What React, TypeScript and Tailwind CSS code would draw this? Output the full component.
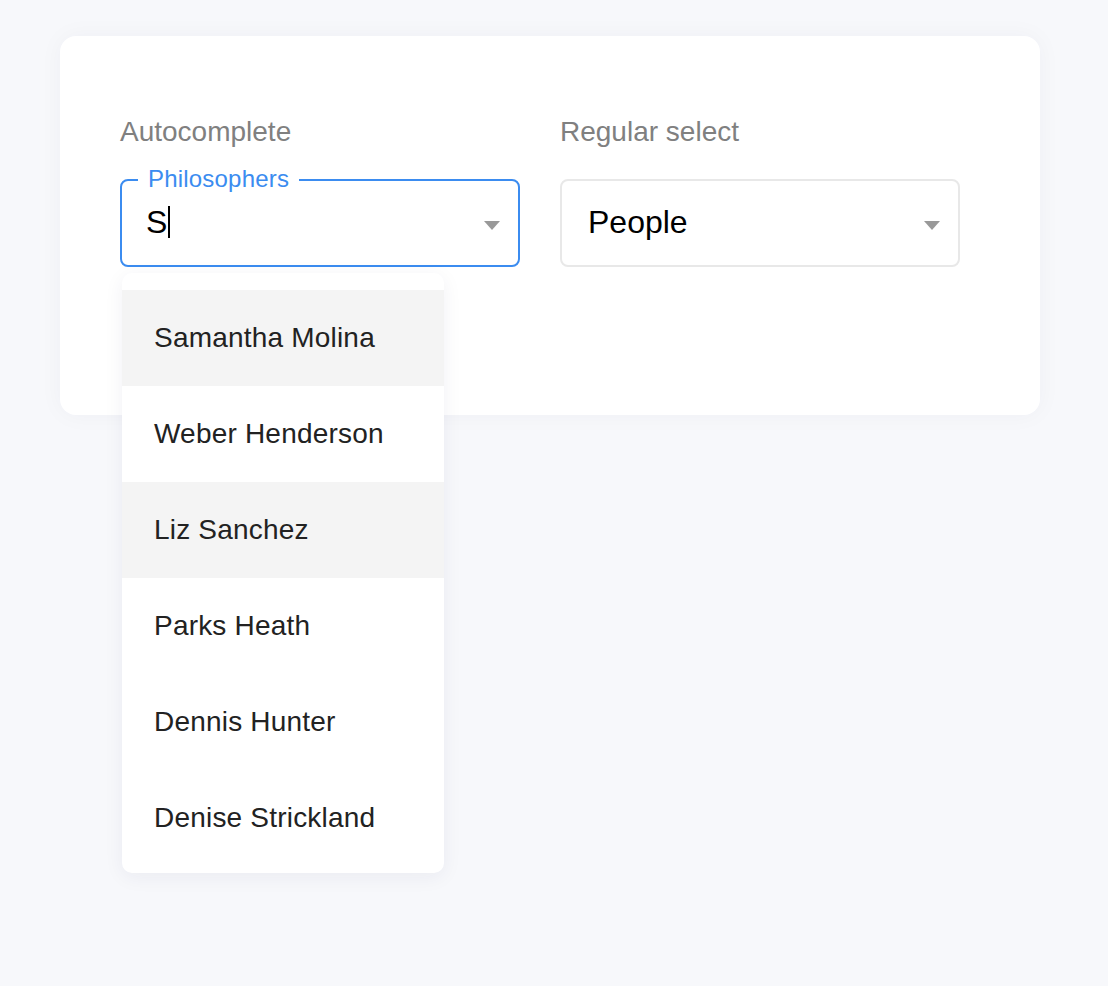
const people = [
  "Samantha Molina",
  "Weber Henderson",
  "Liz Sanchez",
  "Parks Heath",
  "Dennis Hunter",
  "Denise Strickland",
];

function Caret() {
  return (
    <svg width="16" height="9" viewBox="0 0 16 9" className="mt-[4px] shrink-0">
      <path d="M0 0h16L8 9z" fill="#999999" />
    </svg>
  );
}

export default function App() {
  return (
    <div
      className="min-h-screen bg-[#f7f8fb] pt-[36px] pl-[60px]"
      style={{ fontFamily: '"Liberation Sans", Arial, sans-serif' }}
    >
      <div className="w-[980px] rounded-[16px] bg-white pt-[79px] pb-[148px] pl-[60px] shadow-[0_0_24px_rgba(30,40,80,0.04)]">
        <div className="flex gap-[40px]">
          {/* Autocomplete */}
          <div className="relative w-[400px]">
            <div className="text-[28px] leading-[34px] text-[#808080]">Autocomplete</div>
            <div className="relative mt-[30px] flex h-[88px] items-center rounded-[8px] border-2 border-[#3b8cf0] pl-[24px] pr-[18px]">
              <span className="absolute -top-[17px] left-[16px] bg-white px-[10px] text-[24px] leading-[30px] tracking-[0.2px] text-[#3b8cf0]">
                Philosophers
              </span>
              <div className="flex flex-1 items-center pb-[3px] text-[32px] text-black">
                S<span className="ml-[1px] inline-block h-[32px] w-[2px] bg-black" />
              </div>
              <Caret />
            </div>
            <ul className="absolute left-[2px] top-[158px] z-10 w-[322px] rounded-[10px] bg-white pt-[17px] pb-[7px] shadow-[0_4px_20px_rgba(30,40,80,0.06)]">
              {people.map((p, i) => (
                <li
                  key={p}
                  className={`flex h-[96px] items-center pl-[32px] text-[28px] tracking-[0.2px] text-[#222222] ${
                    i === 0 || i === 2 ? "bg-[#f4f4f4]" : ""
                  }`}
                >
                  {p}
                </li>
              ))}
            </ul>
          </div>

          {/* Regular select */}
          <div className="w-[400px]">
            <div className="text-[28px] leading-[34px] text-[#808080]">Regular select</div>
            <div className="mt-[30px] flex h-[88px] items-center rounded-[8px] border-2 border-[#e8e8e8] pl-[26px] pr-[18px]">
              <div className="flex-1 pb-[3px] text-[32px] text-black">People</div>
              <Caret />
            </div>
          </div>
        </div>
      </div>
    </div>
  );
}
